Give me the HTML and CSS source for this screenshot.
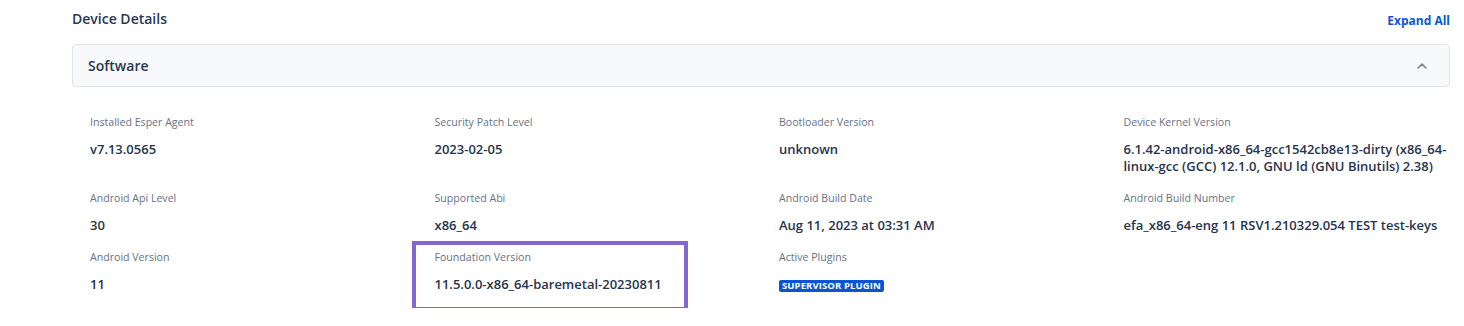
FILE: index.html
```html
<!DOCTYPE html>
<html lang="en">
<head>
<meta charset="utf-8">
<title>Device Details</title>
<link rel="stylesheet" href="styles.css">
</head>
<body>
<div class="page">
  <div class="header">
    <h2 class="title">Device Details</h2>
    <a class="expand" href="#">Expand All</a>
  </div>
  <div class="accordion">
    <span class="acc-title">Software</span>
    <svg class="chev" width="10" height="6" viewBox="0 0 10 6"><polyline points="1,5 5,1.2 9,5" fill="none" stroke="#7a808c" stroke-width="1.6" stroke-linecap="round" stroke-linejoin="round"/></svg>
  </div>
  <div class="grid">
    <div class="cell"><div class="label">Installed Esper Agent</div><div class="value">v7.13.0565</div></div>
    <div class="cell"><div class="label">Security Patch Level</div><div class="value">2023-02-05</div></div>
    <div class="cell"><div class="label">Bootloader Version</div><div class="value">unknown</div></div>
    <div class="cell"><div class="label">Device Kernel Version</div><div class="value">6.1.42-android-x86_64-gcc1542cb8e13-dirty (x86_64-linux-gcc (GCC) 12.1.0, GNU ld (GNU Binutils) 2.38)</div></div>
    <div class="cell"><div class="label">Android Api Level</div><div class="value">30</div></div>
    <div class="cell"><div class="label">Supported Abi</div><div class="value">x86_64</div></div>
    <div class="cell"><div class="label">Android Build Date</div><div class="value">Aug 11, 2023 at 03:31 AM</div></div>
    <div class="cell"><div class="label">Android Build Number</div><div class="value">efa_x86_64-eng 11 RSV1.210329.054 TEST test-keys</div></div>
    <div class="cell"><div class="label">Android Version</div><div class="value">11</div></div>
    <div class="cell highlight"><div class="label">Foundation Version</div><div class="value">11.5.0.0-x86_64-baremetal-20230811</div></div>
    <div class="cell"><div class="label">Active Plugins</div><div class="value"><span class="badge">Supervisor Plugin</span></div></div>
    <div class="cell"></div>
  </div>
</div>
</body>
</html>
```
FILE: styles.css
```css
* { box-sizing: border-box; }
html, body { margin: 0; padding: 0; background: #ffffff; }
body {
  font-family: "Open Sans", "Liberation Sans", sans-serif;
  color: #23304a;
}
.page {
  padding: 0 14px 0 72px;
}
.header {
  display: flex;
  justify-content: space-between;
  align-items: center;
  height: 44px;
  padding-bottom: 8px;
}
.title {
  margin: 0;
  font-size: 14px;
  font-weight: 600;
  color: #2a3752;
}
.expand {
  font-size: 12px;
  font-weight: 700;
  color: #0b58d0;
  text-decoration: none;
  margin-top: 4px;
}
.accordion {
  display: flex;
  justify-content: space-between;
  align-items: center;
  height: 43px;
  padding: 0 22px 0 15px;
  background: #f8f9fb;
  border: 1px solid #e2e4e9;
  border-radius: 4px;
}
.acc-title {
  font-size: 14px;
  font-weight: 600;
  color: #2a3752;
}
.chev { display: block; }
.grid {
  display: grid;
  grid-template-columns: repeat(4, minmax(0, 1fr));
  padding-top: 27px;
}
.cell {
  padding: 0 0 15px 18px;
  position: relative;
}
.label {
  font-size: 10.6px;
  line-height: 16px;
  color: #687186;
}
.value {
  margin-top: 11px;
  font-size: 13px;
  line-height: 17px;
  font-weight: 600;
  color: #27344d;
}
.highlight::after {
  content: "";
  position: absolute;
  left: -5px;
  top: -8px;
  width: 268px;
  height: 62px;
  border: 4px solid #8466cf;
  pointer-events: none;
}
.badge {
  display: inline-block;
  background: #0b55d0;
  color: #ffffff;
  font-size: 9.5px;
  font-weight: 700;
  text-transform: uppercase;
  line-height: 12px;
  padding: 0 3px;
  border-radius: 2px;
  letter-spacing: 0.1px;
  vertical-align: middle;
}
```
